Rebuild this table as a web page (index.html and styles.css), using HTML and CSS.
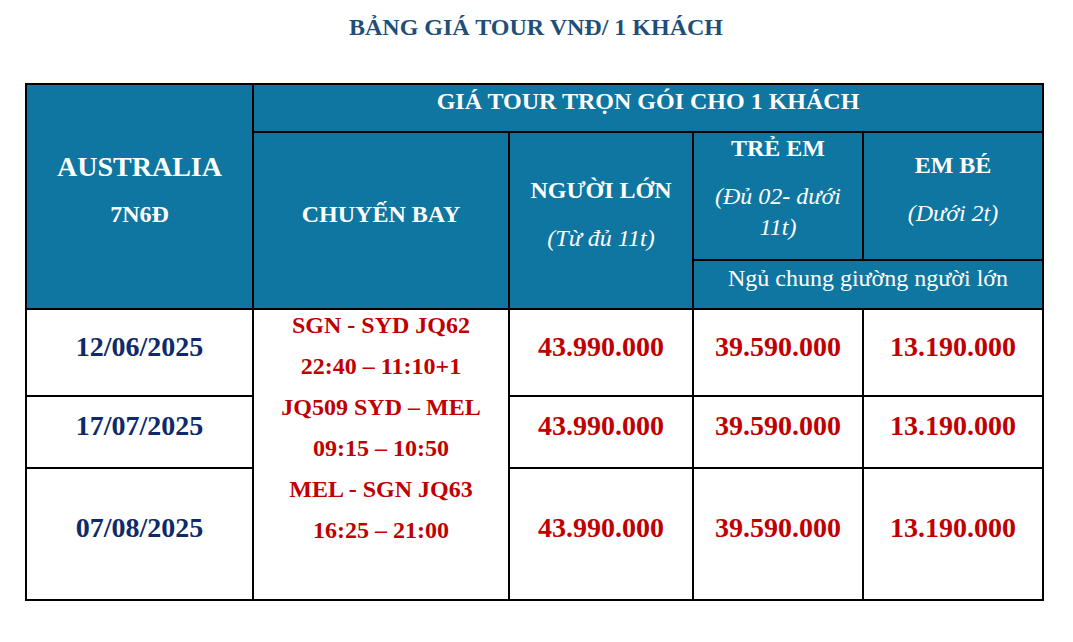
FILE: index.html
```html
<!DOCTYPE html>
<html lang="vi">
<head>
<meta charset="utf-8">
<title>Bảng giá tour</title>
<link rel="stylesheet" href="styles.css">
</head>
<body>
<div class="page">
  <h1 class="title">BẢNG GIÁ TOUR VNĐ/ 1 KHÁCH</h1>
  <div class="price-table">
    <div class="cell head c-dest">
      <p class="big">AUSTRALIA</p>
      <p>7N6Đ</p>
    </div>
    <div class="cell head c-package"><p>GIÁ TOUR TRỌN GÓI CHO 1 KHÁCH</p></div>
    <div class="cell head c-flight-h"><p>CHUYẾN BAY</p></div>
    <div class="cell head c-adult">
      <p>NGƯỜI LỚN</p>
      <p class="note">(Từ đủ 11t)</p>
    </div>
    <div class="cell head c-child">
      <p>TRẺ EM</p>
      <p class="note">(Đủ 02- dưới 11t)</p>
    </div>
    <div class="cell head c-baby">
      <p>EM BÉ</p>
      <p class="note">(Dưới 2t)</p>
    </div>
    <div class="cell head c-share"><p class="plain">Ngủ chung giường người lớn</p></div>

    <div class="cell date r1">12/06/2025</div>
    <div class="cell flights">
      <p>SGN - SYD JQ62</p>
      <p>22:40 – 11:10+1</p>
      <p>JQ509 SYD – MEL</p>
      <p>09:15 – 10:50</p>
      <p>MEL - SGN JQ63</p>
      <p>16:25 – 21:00</p>
    </div>
    <div class="cell price r1">43.990.000</div>
    <div class="cell price r1">39.590.000</div>
    <div class="cell price r1">13.190.000</div>

    <div class="cell date r2">17/07/2025</div>
    <div class="cell price r2">43.990.000</div>
    <div class="cell price r2">39.590.000</div>
    <div class="cell price r2">13.190.000</div>

    <div class="cell date r3">07/08/2025</div>
    <div class="cell price r3">43.990.000</div>
    <div class="cell price r3">39.590.000</div>
    <div class="cell price r3">13.190.000</div>
  </div>
</div>
</body>
</html>
```

FILE: styles.css
```css
* { box-sizing: border-box; }

html, body {
  margin: 0;
  padding: 0;
  background: #ffffff;
}

body {
  font-family: "Liberation Serif", "Times New Roman", serif;
}

.page {
  width: 1073px;
  padding: 13px 0 0 25px;
}

.title {
  margin: 0 0 42px 0;
  width: 1022px;
  text-align: center;
  font-size: 24px;
  line-height: 28px;
  font-weight: bold;
  color: #1f4e79;
}

.price-table {
  display: grid;
  width: 1019px;
  grid-template-columns: 227px 256px 184px 170px 180px;
  grid-template-rows: 48px 128px 49px 87px 72px 132px;
  border-left: 2px solid #000;
  border-top: 2px solid #000;
}

.cell {
  border-right: 2px solid #000;
  border-bottom: 2px solid #000;
  display: flex;
  flex-direction: column;
  align-items: center;
  justify-content: center;
  text-align: center;
  padding: 0 6px 13px;
  font-weight: bold;
}

.cell p {
  margin: 0;
}

.head {
  background: #0e76a0;
  color: #ffffff;
  font-size: 24px;
  line-height: 31px;
  gap: 17px;
}

.head .big { font-size: 28px; }
.head .note { font-style: italic; font-weight: normal; }
.head .plain { font-weight: normal; }

.c-dest { grid-column: 1; grid-row: 1 / 4; }
.c-package { grid-column: 2 / 6; grid-row: 1; }
.c-flight-h { grid-column: 2; grid-row: 2 / 4; }
.c-adult { grid-column: 3; grid-row: 2 / 4; }
.c-child { grid-column: 4; grid-row: 2; padding-bottom: 16px; }
.c-baby { grid-column: 5; grid-row: 2; }
.c-share { grid-column: 4 / 6; grid-row: 3; }

.date {
  grid-column: 1;
  color: #0f2a6b;
  font-size: 28px;
  line-height: 31px;
}

.price {
  color: #c00000;
  font-size: 28px;
  line-height: 31px;
}

.r1 { grid-row: 4; }
.r2 { grid-row: 5; }
.r3 { grid-row: 6; }

.flights {
  grid-column: 2;
  grid-row: 4 / 7;
  justify-content: flex-start;
  padding: 2px 6px 0;
  gap: 14px;
  color: #c00000;
  font-size: 24px;
  line-height: 27px;
}
```
